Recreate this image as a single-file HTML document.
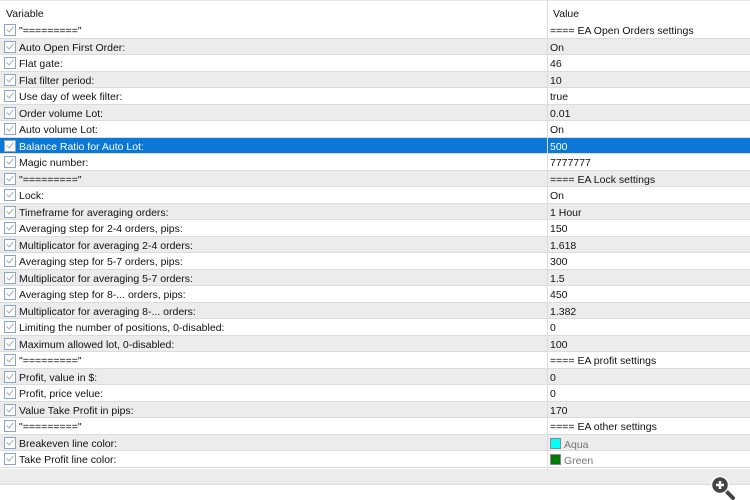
<!DOCTYPE html><html><head><style>
body{margin:0;width:750px;height:490px;overflow:hidden;background:#fff;font-family:"Liberation Sans",sans-serif;font-size:10.5px;color:#111;position:relative}
.hdr{position:absolute;left:0;top:0;width:750px;height:22px;border-top:1px solid #e5e5e5;box-sizing:border-box}
.hdr span{position:absolute;top:7px}
.r{position:absolute;left:0;width:750px;height:16.5px;border-bottom:1px solid #dcdcdc;box-sizing:border-box}
.g{background:#ececec}
.s{background:#0a78d4;color:#fff}
.r .cb{position:absolute;left:4px;top:2px;width:10px;height:10px;border:1px solid #8aa6c4;background:#fff}
.r .cb:after{content:"";position:absolute;left:3px;top:0px;width:3px;height:6px;border:solid #aaa;border-width:0 1px 1px 0;transform:rotate(40deg)}
.r .n{position:absolute;left:19px;top:3px}
.r .v{position:absolute;left:550px;top:3px}
.vl{position:absolute;left:547px;top:0;width:1px;height:470px;background:#dcdcdc}
.sw{display:inline-block;width:9px;height:9px;border:1px solid #888;vertical-align:-1px;margin-right:3px}
</style></head><body>
<div class="hdr"><span style="left:6px">Variable</span><span style="left:553px">Value</span></div>
<div id="rows"></div>
<div class="r g" style="top:469px;height:16px"></div>
<div class="vl"></div>
<svg style="position:absolute;left:708px;top:474px" width="32" height="26" viewBox="0 0 32 26"><path d="M18 17l7 7" stroke="#fff" stroke-width="7" stroke-linecap="round"/><path d="M18 17l7 7" stroke="#444" stroke-width="4" stroke-linecap="round"/><circle cx="12" cy="11" r="8.5" fill="#444" stroke="#fff" stroke-width="1.5"/><path d="M8 11h8M12 7v8" stroke="#fff" stroke-width="2.5"/></svg>
<script>
var d=[['"========="','==== EA Open Orders settings'],['Auto Open First Order:','On'],['Flat gate:','46'],['Flat filter period:','10'],['Use day of week filter:','true'],['Order volume Lot:','0.01'],['Auto volume Lot:','On'],['Balance Ratio for Auto Lot:','500'],['Magic number:','7777777'],['"========="','==== EA Lock settings'],['Lock:','On'],['Timeframe for averaging orders:','1 Hour'],['Averaging step for 2-4 orders, pips:','150'],['Multiplicator for averaging 2-4 orders:','1.618'],['Averaging step for 5-7 orders, pips:','300'],['Multiplicator for averaging 5-7 orders:','1.5'],['Averaging step for 8-... orders, pips:','450'],['Multiplicator for averaging 8-... orders:','1.382'],['Limiting the number of positions, 0-disabled:','0'],['Maximum allowed lot, 0-disabled:','100'],['"========="','==== EA profit settings'],['Profit, value in $:','0'],['Profit, price velue:','0'],['Value Take Profit in pips:','170'],['"========="','==== EA other settings'],['Breakeven line color:','<span class="sw" style="background:#0ff"></span><span style="color:#777">Aqua</span>'],['Take Profit line color:','<span class="sw" style="background:#007a00"></span><span style="color:#777">Green</span>']];
var h='';d.forEach(function(x,i){var c=i==7?'s':(i%2?'g':'');h+='<div class="r '+c+'" style="top:'+(22+i*16.5)+'px"><span class="cb"></span><span class="n">'+x[0]+'</span><span class="v">'+x[1]+'</span></div>';});
document.getElementById('rows').innerHTML=h;
</script>
</body></html>
